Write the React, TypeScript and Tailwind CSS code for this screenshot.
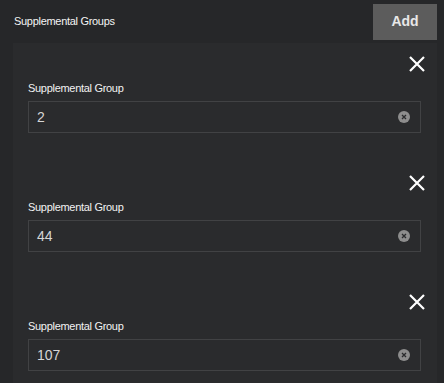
import React, { useState } from "react";

const CloseIcon = () => (
  <svg width="18" height="18" viewBox="0 0 18 18" fill="none">
    <path d="M2 2L16 16M16 2L2 16" stroke="#ffffff" strokeWidth="2.2" />
  </svg>
);

const ClearIcon = () => (
  <svg width="12" height="12" viewBox="0 0 12 12">
    <circle cx="6" cy="6" r="6" fill="#8d8d8d" />
    <path d="M4 4L8 8M8 4L4 8" stroke="#2a2b2d" strokeWidth="1.3" />
  </svg>
);

const GroupPanel = ({ value }: { value: string }) => (
  <div className="bg-[#2a2b2d] pt-[12px] pb-[29px] pl-[15px] pr-[16px]">
    <div className="flex justify-end -mr-[5px]">
      <button className="flex items-center justify-center">
        <CloseIcon />
      </button>
    </div>
    <label className="block mt-[7px] mb-[5px] text-[11px] leading-[16px] tracking-[-0.3px] text-[#f2f2f2]">
      Supplemental Group
    </label>
    <div className="flex items-center h-[32px] border border-[#414244] bg-[#2a2b2d] pl-[8px] pr-[10px]">
      <span className="flex-1 text-[14px] text-[#d6d6d6]">{value}</span>
      <ClearIcon />
    </div>
  </div>
);

export default function App() {
  const [groups] = useState(["2", "44", "107"]);

  return (
    <div
      className="w-[444px] h-[383px] overflow-hidden bg-[#262729]"
      style={{ fontFamily: "'Liberation Sans', Arial, sans-serif" }}
    >
      <div className="flex items-center justify-between h-[43px] pl-[14px] pr-[7px]">
        <span className="text-[11px] tracking-[-0.3px] text-[#f4f4f4]">Supplemental Groups</span>
        <button className="w-[64px] h-[36px] bg-[#5c5c5c] text-[14px] font-bold text-[#e8e8e8]">
          Add
        </button>
      </div>
      <div className="ml-[13px] mr-[7px]">
        {groups.map((g, i) => (
          <GroupPanel key={i} value={g} />
        ))}
      </div>
    </div>
  );
}
